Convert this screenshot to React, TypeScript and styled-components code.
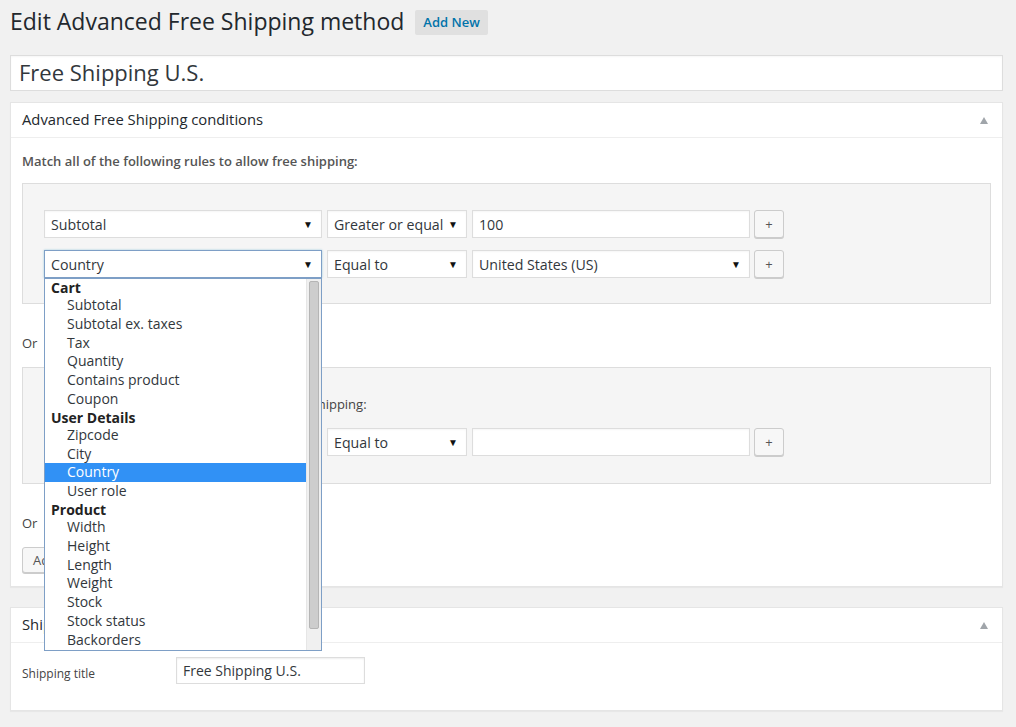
import React from 'react';
import styled, { createGlobalStyle } from 'styled-components';

const GlobalStyle = createGlobalStyle`
  html, body {
    margin: 0;
    padding: 0;
    background: #f1f1f1;
    font-family: 'Open Sans', 'Liberation Sans', sans-serif;
    color: #444;
  }
  * { box-sizing: border-box; }
`;

const Wrap = styled.div`
  padding: 0 13px 40px 10px;
`;

const Header = styled.div`
  display: flex;
  align-items: center;
  gap: 11px;
  padding-top: 7px;
`;

const Title = styled.h1`
  margin: 0;
  font-size: 23px;
  font-weight: 400;
  line-height: 29px;
  color: #23282d;
`;

const AddNew = styled.span`
  display: inline-block;
  background: #e0e0e0;
  color: #0073aa;
  font-size: 13px;
  font-weight: 600;
  line-height: 17px;
  padding: 4px 8px;
  border-radius: 2px;
  margin-top: 2px;
`;

const TitleInput = styled.div`
  margin-top: 19px;
  height: 36px;
  background: #fff;
  border: 1px solid #ddd;
  box-shadow: inset 0 1px 2px rgba(0, 0, 0, 0.04);
  font-size: 22px;
  line-height: 33px;
  padding-left: 8px;
  color: #32373c;
`;

const Panel = styled.div<{ $gap: number }>`
  margin-top: ${(p) => p.$gap}px;
  background: #fff;
  border: 1px solid #e5e5e5;
  box-shadow: 0 1px 1px rgba(0, 0, 0, 0.04);
`;

const PanelHead = styled.div`
  display: flex;
  align-items: center;
  justify-content: space-between;
  height: 35px;
  padding: 0 14px 3px 11px;
  border-bottom: 1px solid #eee;
  font-size: 14.8px;
  color: #23282d;
`;

const Toggle = styled.span`
  width: 0;
  height: 0;
  margin-top: 3px;
  border-left: 4px solid transparent;
  border-right: 4px solid transparent;
  border-bottom: 7px solid #a0a5aa;
`;

const PanelBody = styled.div<{ $pad: string }>`
  padding: ${(p) => p.$pad};
`;

const Intro = styled.p`
  margin: 0;
  font-size: 13px;
  font-weight: 600;
  line-height: 19px;
  color: #555;
`;

const Group = styled.div<{ $top: number; $bottom: number; $mt: number }>`
  margin-top: ${(p) => p.$mt}px;
  background: #f5f5f5;
  border: 1px solid #ddd;
  padding: ${(p) => p.$top}px 21px ${(p) => p.$bottom}px;
  display: flex;
  flex-direction: column;
  gap: 12px;
`;

const GroupText = styled.p`
  margin: 0 0 2px;
  font-size: 13px;
  line-height: 19px;
  color: #444;
`;

const Row = styled.div`
  display: flex;
  align-items: center;
  gap: 5px;
`;

const Field = styled.div<{ $w: number; $focus?: boolean }>`
  position: relative;
  width: ${(p) => p.$w}px;
  height: 28px;
  background: #fff;
  border: 1px solid ${(p) => (p.$focus ? '#7e9fc6' : '#ddd')};
  box-shadow: ${(p) => (p.$focus ? '0 0 2px rgba(30, 140, 190, 0.4)' : 'inset 0 1px 2px rgba(0,0,0,0.04)')};
  display: flex;
  align-items: center;
  justify-content: space-between;
  padding: 0 6px 0 6px;
  font-size: 14.2px;
  color: #32373c;
`;

const Arrow = styled.span`
  font-size: 10px;
  color: #111;
  line-height: 1;
  margin-right: 2px;
`;

const Plus = styled.div`
  margin-left: -1px;
  width: 30px;
  height: 28px;
  border: 1px solid #ccc;
  border-radius: 3px;
  background: #f7f7f7;
  box-shadow: 0 1px 0 #ccc;
  display: flex;
  align-items: center;
  justify-content: center;
  font-size: 13px;
  color: #555;
`;

const OrText = styled.p<{ $mt: number }>`
  margin: ${(p) => p.$mt}px 0 14px;
  font-size: 13px;
  line-height: 19px;
  color: #444;
`;

const Button = styled.div`
  display: inline-block;
  height: 26px;
  line-height: 24px;
  padding: 0 10px;
  border: 1px solid #ccc;
  border-radius: 3px;
  background: #f7f7f7;
  box-shadow: 0 1px 0 #ccc;
  font-size: 13px;
  color: #555;
`;

const ListBox = styled.div`
  position: absolute;
  top: 27px;
  left: -1px;
  width: 278px;
  height: 373px;
  background: #fff;
  border: 1px solid #7e9fc6;
  display: flex;
  z-index: 10;
`;

const Options = styled.div`
  flex: 1;
  overflow: hidden;
`;

const OptGroup = styled.div`
  height: 17px;
  line-height: 17px;
  padding-left: 6px;
  font-size: 14px;
  font-weight: 700;
  color: #222;
`;

const Opt = styled.div<{ $active?: boolean }>`
  height: 18.8px;
  line-height: 18.8px;
  padding-left: 22px;
  font-size: 14px;
  color: ${(p) => (p.$active ? '#fff' : '#32373c')};
  background: ${(p) => (p.$active ? '#3191f5' : 'transparent')};
`;

const ScrollTrack = styled.div`
  width: 15px;
  background: #f0f0f0;
  border-left: 1px solid #e6e6e6;
  padding: 2px 2px 0;
`;

const ScrollThumb = styled.div`
  height: 348px;
  background: #cdcdcd;
  border: 1px solid #b5b5b5;
  border-radius: 2px;
`;

const FormRow = styled.div`
  display: flex;
  align-items: center;
`;

const Label = styled.div`
  width: 154px;
  font-size: 12px;
  color: #444;
  padding-top: 5px;
`;

const SmallInput = styled.div`
  width: 189px;
  height: 27px;
  background: #fff;
  border: 1px solid #ddd;
  box-shadow: inset 0 1px 2px rgba(0, 0, 0, 0.07);
  font-size: 14px;
  line-height: 25px;
  padding-left: 6px;
  color: #32373c;
`;

const menu: { group: string; items: string[] }[] = [
  { group: 'Cart', items: ['Subtotal', 'Subtotal ex. taxes', 'Tax', 'Quantity', 'Contains product', 'Coupon'] },
  { group: 'User Details', items: ['Zipcode', 'City', 'Country', 'User role'] },
  { group: 'Product', items: ['Width', 'Height', 'Length', 'Weight', 'Stock', 'Stock status', 'Backorders'] },
];

const Select: React.FC<{ w: number; value: string; focus?: boolean; children?: React.ReactNode }> = ({
  w,
  value,
  focus,
  children,
}) => (
  <Field $w={w} $focus={focus}>
    <span>{value}</span>
    <Arrow>▼</Arrow>
    {children}
  </Field>
);

const ConditionList = () => (
  <ListBox>
    <Options>
      {menu.map(({ group, items }) => (
        <React.Fragment key={group}>
          <OptGroup>{group}</OptGroup>
          {items.map((item) => (
            <Opt key={item} $active={item === 'Country'}>
              {item}
            </Opt>
          ))}
        </React.Fragment>
      ))}
    </Options>
    <ScrollTrack>
      <ScrollThumb />
    </ScrollTrack>
  </ListBox>
);

export default function App() {
  return (
    <>
      <GlobalStyle />
      <Wrap>
        <Header>
          <Title>Edit Advanced Free Shipping method</Title>
          <AddNew>Add New</AddNew>
        </Header>
        <TitleInput>Free Shipping U.S.</TitleInput>

        <Panel $gap={11}>
          <PanelHead>
            <span>Advanced Free Shipping conditions</span>
            <Toggle />
          </PanelHead>
          <PanelBody $pad="14px 11px 13px">
            <Intro>Match all of the following rules to allow free shipping:</Intro>
            <Group $top={26} $bottom={25} $mt={12}>
              <Row>
                <Select w={278} value="Subtotal" />
                <Select w={140} value="Greater or equal" />
                <Field $w={278}>100</Field>
                <Plus>+</Plus>
              </Row>
              <Row>
                <Select w={278} value="Country" focus>
                  <ConditionList />
                </Select>
                <Select w={140} value="Equal to" />
                <Select w={278} value="United States (US)" />
                <Plus>+</Plus>
              </Row>
            </Group>
            <OrText $mt={30}>Or</OrText>
            <Group $top={27} $bottom={27} $mt={0}>
              <GroupText>Match all of the following rules to allow free shipping:</GroupText>
              <Row>
                <Select w={278} value="Subtotal" />
                <Select w={140} value="Equal to" />
                <Field $w={278} />
                <Plus>+</Plus>
              </Row>
            </Group>
            <OrText $mt={30}>Or</OrText>
            <Button>Add 'Or' group</Button>
          </PanelBody>
        </Panel>

        <Panel $gap={20}>
          <PanelHead>
            <span>Shipping settings</span>
            <Toggle />
          </PanelHead>
          <PanelBody $pad="14px 11px 26px">
            <FormRow>
              <Label>Shipping title</Label>
              <SmallInput>Free Shipping U.S.</SmallInput>
            </FormRow>
          </PanelBody>
        </Panel>
      </Wrap>
    </>
  );
}
